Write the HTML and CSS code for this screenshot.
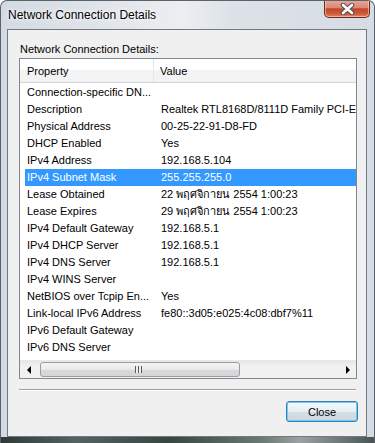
FILE: index.html
```html
<!DOCTYPE html>
<html lang="en">
<head>
<meta charset="UTF-8">
<title>Network Connection Details</title>
<link rel="stylesheet" href="styles.css">
</head>
<body>
    <div class="window">
        <div class="titlebar">
            <span class="title">Network Connection Details</span>
            <div class="close-x">
                <svg width="17" height="12" viewBox="0 0 17 12">
                    <path d="M4 2 L13 10 M13 2 L4 10" stroke="#4c4f55" stroke-width="4.6" stroke-linecap="round"/>
                    <path d="M4 2 L13 10 M13 2 L4 10" stroke="#ffffff" stroke-width="2.6" stroke-linecap="round"/>
                </svg>
            </div>
        </div>
        <div class="client">
            <div class="caption">Network Connection Details:</div>
            <div class="list">
                <div class="list-head">
                    <div class="head-prop">Property</div>
                    <div class="head-val">Value</div>
                </div>
                <div class="list-body">
                    <div class="row"><span class="prop">Connection-specific DN...</span><span class="val"></span></div>
                    <div class="row"><span class="prop">Description</span><span class="val">Realtek RTL8168D/8111D Family PCI-E</span></div>
                    <div class="row"><span class="prop">Physical Address</span><span class="val">00-25-22-91-D8-FD</span></div>
                    <div class="row"><span class="prop">DHCP Enabled</span><span class="val">Yes</span></div>
                    <div class="row"><span class="prop">IPv4 Address</span><span class="val">192.168.5.104</span></div>
                    <div class="row selected"><span class="prop">IPv4 Subnet Mask</span><span class="val">255.255.255.0</span></div>
                    <div class="row"><span class="prop">Lease Obtained</span><span class="val">22 พฤศจิกายน 2554 1:00:23</span></div>
                    <div class="row"><span class="prop">Lease Expires</span><span class="val">29 พฤศจิกายน 2554 1:00:23</span></div>
                    <div class="row"><span class="prop">IPv4 Default Gateway</span><span class="val">192.168.5.1</span></div>
                    <div class="row"><span class="prop">IPv4 DHCP Server</span><span class="val">192.168.5.1</span></div>
                    <div class="row"><span class="prop">IPv4 DNS Server</span><span class="val">192.168.5.1</span></div>
                    <div class="row"><span class="prop">IPv4 WINS Server</span><span class="val"></span></div>
                    <div class="row"><span class="prop">NetBIOS over Tcpip En...</span><span class="val">Yes</span></div>
                    <div class="row"><span class="prop">Link-local IPv6 Address</span><span class="val">fe80::3d05:e025:4c08:dbf7%11</span></div>
                    <div class="row"><span class="prop">IPv6 Default Gateway</span><span class="val"></span></div>
                    <div class="row"><span class="prop">IPv6 DNS Server</span><span class="val"></span></div>
                </div>
                <!-- horizontal scrollbar -->
                <div class="hscroll">
                    <div class="sb-btn"><span class="arrow-left"></span></div>
                    <div class="sb-track">
                        <div class="thumb"><span class="grip"></span></div>
                    </div>
                    <div class="sb-btn"><span class="arrow-right"></span></div>
                </div>
            </div>
            <div class="sep"></div>
            <div class="actions">
                <button class="btn">Close</button>
            </div>
        </div>
        <div class="frame-bottom"></div>
    </div>
</body>
</html>
```

FILE: styles.css
```css
html, body {
    margin: 0;
    padding: 0;
}
body {
    width: 375px;
    height: 443px;
    overflow: hidden;
    background: #ffffff;
    font-family: "Liberation Sans", Arial, sans-serif;
    font-size: 11px;
    color: #000;
}
.window {
    box-sizing: border-box;
    width: 375px;
    height: 443px;
    display: flex;
    flex-direction: column;
    border: 1px solid #5a636c;
    border-bottom: none;
    border-radius: 7px 7px 0 0;
    background: linear-gradient(to right, #d3dae2, #e4e8ec 35%, #eceff1 48%, #dde2e8 62%, #d5dce3);
    overflow: hidden;
}
.titlebar {
    height: 28px;
    display: flex;
    align-items: flex-start;
    justify-content: space-between;
}
.title {
    margin: 7px 0 0 7px;
    font-size: 12px;
    line-height: 15px;
    color: #000;
    text-shadow: 0 0 6px #ffffff, 0 0 3px #ffffff;
}
.close-x {
    width: 46px;
    height: 18px;
    margin-top: -1px;
    margin-right: 4px;
    box-sizing: border-box;
    border: 1px solid #6e2a1c;
    border-top: none;
    border-radius: 0 0 5px 5px;
    background: linear-gradient(to bottom, #e9a999 0%, #d88a76 45%, #c2462a 52%, #cf5a36 80%, #e5866a 100%);
    box-shadow: inset 0 0 0 1px rgba(255, 210, 200, 0.6);
    display: flex;
    align-items: center;
    justify-content: center;
}
.close-x svg {
    display: block;
}
.client {
    flex: 1;
    margin: 0 7px 0 6px;
    border: 1px solid #6f7a82;
    background: #f0f0f0;
    display: flex;
    flex-direction: column;
}
.caption {
    padding: 12px 0 0 12px;
    line-height: 14px;
    height: 14px;
    margin-bottom: 2px;
}
.list {
    box-sizing: border-box;
    height: 321px;
    margin: 0 9px 0 11px;
    border: 1px solid #828790;
    background: #ffffff;
    display: flex;
    flex-direction: column;
    overflow: hidden;
}
.list-head {
    height: 23px;
    display: flex;
    border-bottom: 1px solid #d5d5d5;
    background: linear-gradient(to bottom, #ffffff 0%, #ffffff 45%, #f3f4f6 50%, #f1f2f4 100%);
}
.head-prop {
    width: 126px;
    padding: 6px 0 0 7px;
    border-right: 1px solid #e3e6ea;
}
.head-val {
    padding: 6px 0 0 6px;
}
.list-body {
    flex: 1;
    padding-top: 1px;
}
.row {
    height: 17px;
    line-height: 17px;
    margin-left: 5px;
    display: flex;
    white-space: nowrap;
}
.row.selected {
    background: #3399ff;
    color: #ffffff;
}
.prop {
    flex: none;
    width: 127px;
    padding-left: 2px;
    overflow: hidden;
}
.val {
    flex: none;
    padding-left: 7px;
    font-family: "Liberation Sans", "DejaVu Sans", "Noto Sans", Arial, sans-serif;
}
.hscroll {
    height: 17px;
    display: flex;
    background: linear-gradient(to bottom, #e6e6e6, #f1f1f1 30%, #f1f1f1);
    border-top: 1px solid #e9e9e9;
}
.sb-btn {
    width: 17px;
    display: flex;
    align-items: center;
    justify-content: center;
}
.arrow-left {
    width: 0;
    height: 0;
    border-top: 4px solid transparent;
    border-bottom: 4px solid transparent;
    border-right: 4px solid #000;
}
.arrow-right {
    width: 0;
    height: 0;
    border-top: 4px solid transparent;
    border-bottom: 4px solid transparent;
    border-left: 4px solid #000;
}
.sb-track {
    flex: 1;
    padding: 1px 0 1px 3px;
}
.thumb {
    box-sizing: border-box;
    width: 200px;
    height: 15px;
    border: 1px solid #979ea5;
    border-radius: 3px;
    background: linear-gradient(to bottom, #f4f4f4, #e9e9e9 50%, #d9d9d9 51%, #d6d6d6);
    display: flex;
    align-items: center;
    justify-content: center;
}
.grip {
    width: 7px;
    height: 7px;
    background: repeating-linear-gradient(to right, #5a5a5a 0, #5a5a5a 1px, #f0f0f0 1px, #f0f0f0 3px);
    margin-left: -4px;
}
.sep {
    margin: 10px 10px 0 11px;
    height: 0;
    border-top: 1px solid #a0a0a0;
    border-bottom: 1px solid #ffffff;
}
.actions {
    display: flex;
    justify-content: flex-end;
    padding: 10px 8px 0 0;
}
.btn {
    box-sizing: border-box;
    width: 72px;
    height: 21px;
    padding: 0;
    border: 1px solid #3c7fb1;
    border-radius: 3px;
    background: linear-gradient(to bottom, #f4f9fc, #e7eef3 50%, #d5dfe7 51%, #ccd7df);
    box-shadow: inset 0 0 0 1px #6ccaf8;
    font-family: "Liberation Sans", Arial, sans-serif;
    font-size: 11px;
    color: #000;
}
.frame-bottom {
    height: 6px;
    background: linear-gradient(to right, #2f3a37, #55625f 20%, #3a4542 45%, #6d7773 70%, #9aa3a2 80%, #4a5452 100%);
}
```
